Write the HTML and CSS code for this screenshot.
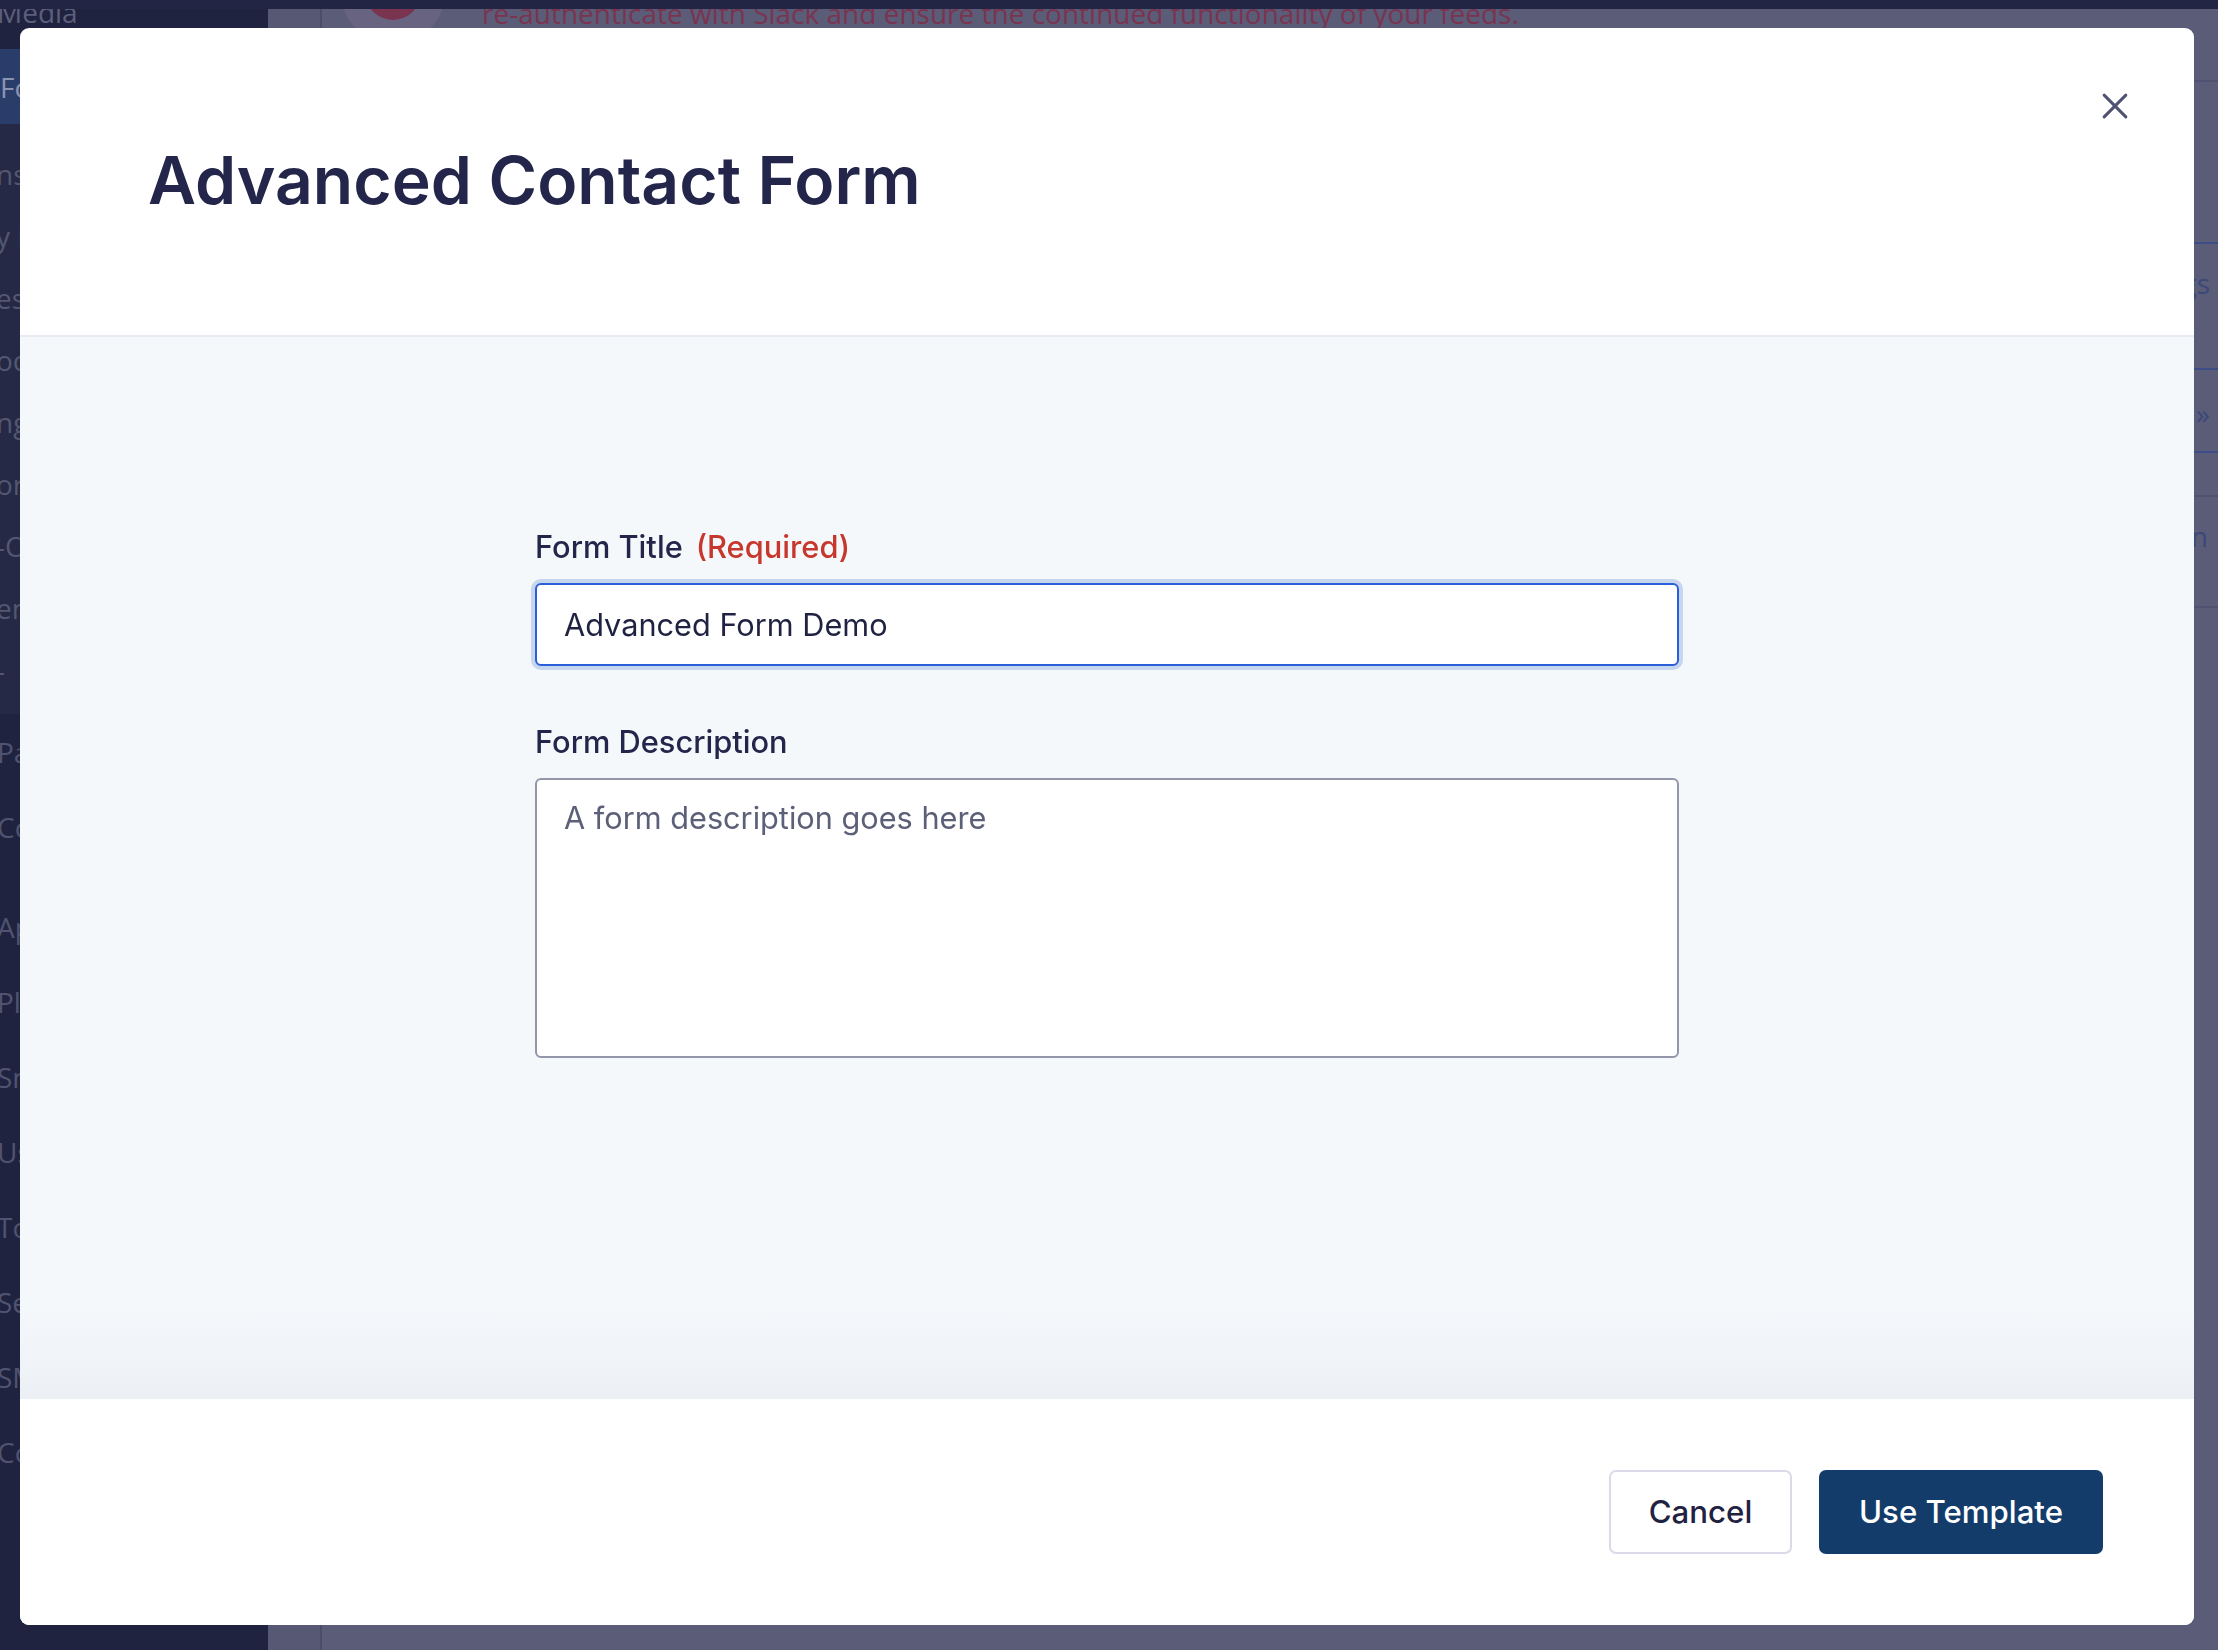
FILE: index.html
```html
<!DOCTYPE html>
<html lang="en">
<head>
<meta charset="utf-8">
<title>Advanced Contact Form</title>
<link rel="stylesheet" href="styles.css">
</head>
<body>
<div class="app">
  <div class="shell">
    <nav class="sidebar">
      <div class="menu-item">Media</div>
      <div class="menu-item current">Forms</div>
      <div class="submenu">
        <div class="sub-item">ns</div>
        <div class="sub-item">y Forms</div>
        <div class="sub-item">es</div>
        <div class="sub-item">ocs</div>
        <div class="sub-item">ngs</div>
        <div class="sub-item">ort</div>
        <div class="sub-item">-Ons</div>
        <div class="sub-item">em</div>
        <div class="sub-item">-</div>
      </div>
      <div class="menu-item">Pages</div>
      <div class="menu-item">Comments</div>
      <div class="menu-sep"></div>
      <div class="menu-item">Appearance</div>
      <div class="menu-item">Plugins</div>
      <div class="menu-item">Snippets</div>
      <div class="menu-item">Users</div>
      <div class="menu-item">Tools</div>
      <div class="menu-item">Settings</div>
      <div class="menu-item">SMTP</div>
      <div class="menu-item">Collapse</div>
    </nav>
    <div class="gutter"></div>
    <main class="main">
      <div class="notice">
        <div class="notice-icon"><span class="notice-dot"></span></div>
        <p class="notice-text">re-authenticate with Slack and ensure the continued functionality of your feeds.</p>
      </div>
      <aside class="panel">
        <div class="prow r1"></div>
        <div class="prow r2 blue"></div>
        <div class="prow r3 blue"><span>Settings</span></div>
        <div class="prow r4 blue"><span>»</span></div>
        <div class="prow r5"></div>
        <div class="prow r6"><span>Design</span></div>
      </aside>
    </main>
  </div>
  <div class="adminbar"></div>
</div>

<div class="overlay">
  <div class="modal" role="dialog" aria-labelledby="modal-title">
    <header class="modal-header">
      <h1 class="modal-title" id="modal-title">Advanced Contact Form</h1>
      <button class="close" aria-label="Close">
        <svg viewBox="0 0 24 24" width="26" height="26" fill="none" stroke="currentColor" stroke-width="2.8" stroke-linecap="round">
          <path d="M2 2 L22 22 M22 2 L2 22"/>
        </svg>
      </button>
    </header>
    <section class="modal-body">
      <form class="form">
        <div class="field">
          <label class="field-label" for="title">Form Title <span class="req">(Required)</span></label>
          <input class="input" id="title" type="text" value="Advanced Form Demo">
        </div>
        <div class="field">
          <label class="field-label" for="desc">Form Description</label>
          <textarea class="textarea" id="desc" placeholder="A form description goes here"></textarea>
        </div>
      </form>
    </section>
    <footer class="modal-footer">
      <button class="btn btn-cancel" type="button">Cancel</button>
      <button class="btn btn-primary" type="button">Use Template</button>
    </footer>
  </div>
</div>
</body>
</html>
```

FILE: styles.css
```css
html, body {
  margin: 0;
  padding: 0;
}
body {
  width: 2218px;
  height: 1650px;
  overflow: hidden;
  background: #595b77;
  font-family: Inter, "Noto Sans", sans-serif;
  position: relative;
}

/* ---------- background app (dimmed) ---------- */
.app {
  height: 1650px;
  position: relative;
}
.adminbar {
  position: absolute;
  top: 0;
  left: 0;
  right: 0;
  height: 9px;
  background: #222644;
}
.shell {
  display: flex;
  height: 1650px;
}
.sidebar {
  width: 268px;
  flex: none;
  background: #20233f;
  margin-top: -26px;
  font-family: "Open Sans", "Noto Sans", sans-serif;
  font-size: 28px;
  color: #4f5371;
  overflow: hidden;
  white-space: nowrap;
}
.menu-item {
  height: 75px;
  display: flex;
  align-items: center;
  margin-left: -3px;
}
.menu-item:first-child {
  color: #5b5f7c;
}
.menu-item.current {
  height: 75px;
  margin-left: 0;
  background: #2a3c6a;
  color: #8a93b2;
}
.submenu {
  background: #252946;
  padding: 19px 0 13px;
}
.sub-item {
  height: 62px;
  display: flex;
  align-items: center;
  margin-left: -4px;
  color: #53576f;
}
.menu-sep {
  height: 25px;
}
.gutter {
  width: 52px;
  flex: none;
  background: #565874;
  border-right: 2px solid #4b4d69;
}
.main {
  flex: 1;
  display: flex;
  align-items: flex-start;
  background: #5a5c78;
}
.notice {
  display: flex;
  align-items: flex-start;
  flex: 1;
}
.notice-icon {
  width: 104px;
  height: 104px;
  margin: -60px 0 0 19px;
  border-radius: 50%;
  background: #676380;
  display: flex;
  align-items: center;
  justify-content: center;
  flex: none;
}
.notice-dot {
  width: 56px;
  height: 56px;
  border-radius: 50%;
  background: #7a3450;
}
.notice-text {
  margin: -6px 0 0 37px;
  font-family: "Open Sans", "Noto Sans", sans-serif;
  font-size: 28px;
  line-height: 38px;
  color: #7a3450;
  white-space: nowrap;
}
.panel {
  width: 420px;
  flex: none;
  margin-top: 9px;
  font-family: "Open Sans", "Noto Sans", sans-serif;
  font-size: 28px;
  color: #3b4878;
}
.prow {
  border-bottom: 2px solid #505272;
  display: flex;
  justify-content: flex-end;
  align-items: flex-start;
  padding-right: 8px;
  box-sizing: border-box;
}
.prow.blue {
  border-bottom-color: #3d4e86;
}
.r1 { height: 73px; }
.r2 { height: 162px; }
.r3 { height: 126px; padding-top: 20px; }
.r4 { height: 83px; padding-top: 24px; }
.r5 { height: 44px; }
.r6 { height: 111px; padding-top: 20px; padding-right: 10px; }

/* ---------- modal ---------- */
.overlay {
  position: fixed;
  inset: 0;
  display: flex;
  padding: 28px 24px 25px 20px;
  box-sizing: border-box;
}
.modal {
  flex: 1;
  background: #ffffff;
  border-radius: 9px;
  display: flex;
  flex-direction: column;
  overflow: hidden;
  position: relative;
}
.modal-header {
  height: 309px;
  flex: none;
  box-sizing: border-box;
  display: flex;
  align-items: center;
  padding: 0 0 2px 128px;
  border-bottom: 2px solid #e8ecf2;
}
.modal-title {
  margin: 0;
  font-family: Inter, "Noto Sans", sans-serif;
  font-weight: 600;
  font-size: 66px;
  line-height: 1.2;
  color: #23264a;
}
.close {
  position: absolute;
  top: 65px;
  right: 66px;
  width: 26px;
  height: 26px;
  padding: 0;
  border: 0;
  background: transparent;
  color: #4f5270;
  cursor: pointer;
  display: flex;
}
.modal-body {
  flex: 1;
  display: flex;
  justify-content: center;
  padding-top: 189px;
  background: linear-gradient(to bottom, #f5f8fb 0, #f5f8fb calc(100% - 90px), #eceff4 100%);
}
.form {
  width: 1144px;
}
.field + .field {
  margin-top: 55px;
}
.field-label {
  display: flex;
  gap: 13px;
  font-family: Inter, "Noto Sans", sans-serif;
  font-weight: 500;
  font-size: 30.8px;
  line-height: 42px;
  color: #23264a;
  margin-bottom: 15px;
}
.req {
  color: #c8372d;
}
.input,
.textarea {
  display: block;
  width: 100%;
  box-sizing: border-box;
  margin: 0;
  background: #ffffff;
  font-family: Inter, "Noto Sans", sans-serif;
  font-weight: 400;
  font-size: 30.7px;
  color: #1f2240;
  border-radius: 6px;
  outline: none;
}
.input {
  height: 83px;
  padding: 0 27px;
  border: 2px solid #2b5fd9;
  box-shadow: 0 0 0 4px #c6d6ef;
}
.textarea {
  height: 280px;
  padding: 17px 27px;
  line-height: 42px;
  border: 2px solid #9395a8;
  resize: none;
}
.textarea::placeholder {
  color: #5c5f78;
  opacity: 1;
}
.modal-footer {
  height: 226px;
  flex: none;
  box-sizing: border-box;
  display: flex;
  justify-content: flex-end;
  align-items: flex-start;
  gap: 27px;
  padding: 71px 91px 0 0;
  background: #ffffff;
}
.btn {
  height: 84px;
  border-radius: 7px;
  font-family: Inter, "Noto Sans", sans-serif;
  font-weight: 500;
  font-size: 31.2px;
  cursor: pointer;
  box-sizing: border-box;
  display: flex;
  align-items: center;
  justify-content: center;
}
.btn-cancel {
  width: 183px;
  background: #ffffff;
  border: 2px solid #dadaeb;
  color: #1f2240;
}
.btn-primary {
  width: 284px;
  background: #133c6b;
  border: 0;
  color: #ffffff;
}
```
